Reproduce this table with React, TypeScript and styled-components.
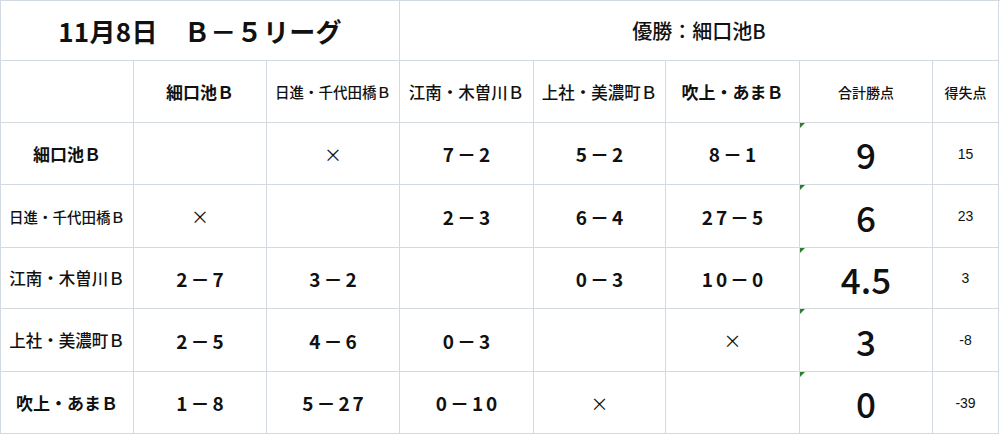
import React from "react";
import styled, { createGlobalStyle } from "styled-components";

const GlobalStyle = createGlobalStyle`
  html, body {
    margin: 0;
    padding: 0;
    background: #ffffff;
  }
  body {
    font-family: "Noto Sans CJK JP", "Noto Sans", sans-serif;
    color: #111111;
  }
`;

type Team = { name: string; size: number; bold?: boolean };

const teams: Team[] = [
  { name: "細口池Ｂ", size: 17, bold: true },
  { name: "日進・千代田橋Ｂ", size: 14.5 },
  { name: "江南・木曽川Ｂ", size: 16.5 },
  { name: "上社・美濃町Ｂ", size: 16.5 },
  { name: "吹上・あまＢ", size: 17, bold: true },
];

const results = [
  { games: ["", "×", "7－2", "5－2", "8－1"], points: "9", diff: "15" },
  { games: ["×", "", "2－3", "6－4", "27－5"], points: "6", diff: "23" },
  { games: ["2－7", "3－2", "", "0－3", "10－0"], points: "4.5", diff: "3" },
  { games: ["2－5", "4－6", "0－3", "", "×"], points: "3", diff: "-8" },
  { games: ["1－8", "5－27", "0－10", "×", ""], points: "0", diff: "-39" },
];

const App = () => {
  return (
    <>
      <GlobalStyle />
      <Table>
        <TitleCell span={3}>
          <Title>11月8日　Ｂ－５リーグ</Title>
        </TitleCell>
        <TitleCell span={5}>
          <Winner>優勝：細口池B</Winner>
        </TitleCell>

        <Cell />
        {teams.map((t) => (
          <Cell key={t.name}>
            <TeamName size={t.size} bold={t.bold}>{t.name}</TeamName>
          </Cell>
        ))}
        <Cell>
          <SmallHead>合計勝点</SmallHead>
        </Cell>
        <Cell>
          <SmallHead>得失点</SmallHead>
        </Cell>

        {results.map((r, i) => (
          <React.Fragment key={teams[i].name}>
            <Cell>
              <TeamName size={teams[i].size} bold={teams[i].bold}>
                {teams[i].name}
              </TeamName>
            </Cell>
            {r.games.map((g, j) => (
              <Cell key={j}>
                {g === "×" ? <Cross>×</Cross> : <Score>{g}</Score>}
              </Cell>
            ))}
            <Cell>
              <Marker />
              <Points>{r.points}</Points>
            </Cell>
            <Cell>
              <Diff>{r.diff}</Diff>
            </Cell>
          </React.Fragment>
        ))}
      </Table>
    </>
  );
};

export default App;

const lineColor = "#d3d9e1";

const Table = styled.div`
  display: grid;
  grid-template-columns: 133px 133px 133px 134px 132px 134px 133px 66px;
  grid-template-rows: 60px 62px 62px 63px 61px 63px 62px;
  width: 999px;
  border-left: 1px solid ${lineColor};
  border-top: 1px solid ${lineColor};
  background: #ffffff;
`;

const Cell = styled.div`
  position: relative;
  box-sizing: border-box;
  display: flex;
  align-items: center;
  justify-content: center;
  border-right: 1px solid ${lineColor};
  border-bottom: 1px solid ${lineColor};
  white-space: nowrap;
`;

const TitleCell = styled(Cell)<{ span: number }>`
  grid-column: span ${(p) => p.span};
`;

const Title = styled.span`
  font-size: 26px;
  font-weight: 600;
  letter-spacing: 0.3px;
`;

const Winner = styled.span`
  font-size: 20px;
  font-weight: 500;
`;

const TeamName = styled.span<{ size: number; bold?: boolean }>`
  font-size: ${(p) => p.size}px;
  font-weight: ${(p) => (p.bold ? 700 : 500)};
`;

const SmallHead = styled.span`
  font-size: 14px;
  font-weight: 500;
`;

const Score = styled.span`
  font-size: 19px;
  font-weight: 600;
  letter-spacing: 3px;
  margin-right: -3px;
`;

const Cross = styled.span`
  font-size: 18px;
  font-weight: 400;
`;

const Points = styled.span`
  font-size: 35px;
  font-weight: 500;
  line-height: 1;
`;

const Diff = styled.span`
  font-family: "Liberation Sans", Arial, sans-serif;
  font-size: 14px;
`;

const Marker = styled.span`
  position: absolute;
  top: 0;
  left: 0;
  width: 0;
  height: 0;
  border-top: 5px solid #2e7d32;
  border-right: 5px solid transparent;
`;
